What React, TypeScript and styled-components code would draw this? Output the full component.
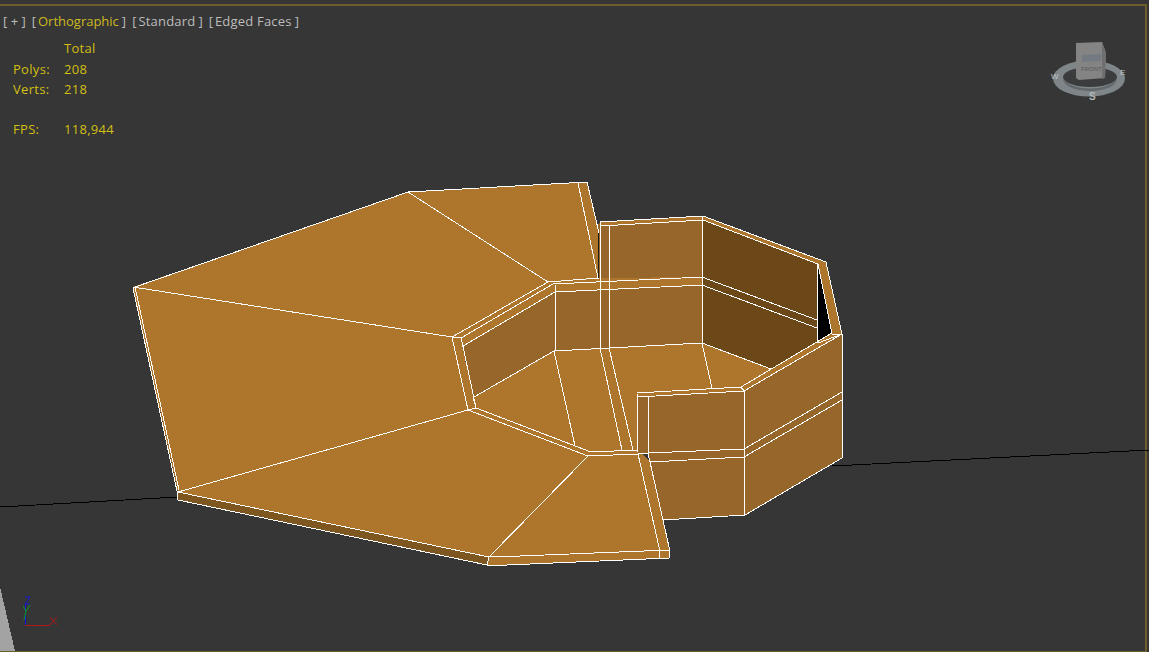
import React from 'react'
import styled, { createGlobalStyle } from 'styled-components';

const GlobalStyle = createGlobalStyle`
  html, body {
    margin: 0;
    padding: 0;
    background: #363636;
  }
`;

const Viewport = styled.div`
  position: relative;
  box-sizing: border-box;
  width: 1149px;
  height: 652px;
  padding-top: 4px;
  overflow: hidden;
  background: #363636;
  font-family: "Open Sans", "Noto Sans", sans-serif;
  font-size: 13px;
`;

const Frame = styled.div`
  box-sizing: border-box;
  width: 1147px;
  height: 648px;
  padding: 6px 0 0 3px;
  border-top: 2px solid #6e5e2c;
  border-right: 2px solid #6e5e2c;
  border-bottom: 1px solid #6e5e2c;
`;

const LabelBar = styled.div`
  display: flex;
  gap: 6px;
  height: 18px;
  line-height: 18px;
  color: #bdbdbd;
  white-space: nowrap;
`;

const Label = styled.span`
  display: flex;
  gap: 2px;
`;

const LabelName = styled.span<{ $active?: boolean }>`
  margin-right: 1px;
  letter-spacing: ${(props) => (props.$active ? '0' : '0.2px')};
  color: ${(props) => (props.$active ? '#cdb91e' : '#bdbdbd')};
`;

const Stats = styled.div`
  display: grid;
  grid-template-columns: 51px auto;
  grid-template-rows: 21px;
  grid-auto-rows: 20px;
  margin: 8px 0 0 10px;
  line-height: 20px;
  letter-spacing: 0.3px;
  color: #d2bf12;
`;

const Gap = styled.div`
  grid-column: 1 / 3;
`;

const Scene = styled.svg`
  position: absolute;
  left: 0;
  top: 0;
  width: 1149px;
  height: 652px;
  shape-rendering: crispEdges;
`;

const Gizmo = styled.svg`
  position: absolute;
  left: 1046px;
  top: 38px;
  width: 84px;
  height: 66px;
`;

const Tripod = styled.svg`
  position: absolute;
  left: 16px;
  top: 592px;
  width: 46px;
  height: 38px;
`;

const faces: [string, string][] = [
  // back walls
  ['#96662a', '555,285 600,222 703,218 703,345 555,352'],
  ['#96662a', '462,346 555,285 555,352 474,398'],
  ['#6c4819', '702,220 817,264 817,345 771,369 702,343'],
  ['#000000', '818,268 833,334 818,343'],
  // top rim of the room
  ['#ae752c', '600,222 703,216 826,262 842,334 832,334 818,264 703,220 601,226'],
  // room floor
  ['#ae752c', '474,397 554,351 702,343 771,369 742,390 637,393 638,452 591,452 476,408'],
  // big floor
  ['#ae752c', '133,287 408,192 587,182 599,233 599,279 548,282 553,284 555,292 462,346 476,408 591,452 638,450 650,462 663,520 669,547 669,558 507,565 487,565 489,557 178,492'],
  ['#7d5620', '178,492 489,557 487,565 178,500'],
  ['#ae752c', '548,282 599,278 703,277 703,285 555,292 462,346 452,337'],
  // front block
  ['#96662a', '638,397 744,391 745,515 663,520 648,453 638,454'],
  ['#96662a', '744,391 842,334 842,458 745,515'],
  ['#ae752c', '637,393 741,387 832,333 842,334 744,391 638,397'],
];

const wires: string[] = [
  // big floor outline
  '135,287 408,192 587,182 599,233',
  '133,288 177,491 178,500 487,565 507,565 669,558 669,547 663,520 745,515 842,458 842,334',
  '135,287 179,490',
  '178,492 489,557 520,556 669,550',
  '408,192 548,282',
  '578,183 598,278',
  '133,287 452,337',
  '178,492 468,410',
  '588,456 489,557',
  '489,557 487,565',
  '659,547 659,558',
  '588,456 638,454 659,547',
  '591,452 638,450',
  '648,453 650,462 663,520 669,547',
  // inner rim
  '452,337 548,282 599,278',
  '461,338 553,284 703,277',
  '463,346 555,292 703,285',
  '452,337 461,337',
  '452,337 468,410 588,456',
  '461,337 476,408 591,452',
  '468,410 476,408',
  // walls
  '600,222 703,216 826,262 842,334 832,334 818,264 703,220 601,226',
  '600,222 600,348',
  '609,225 609,348',
  '555,285 555,351',
  '702,216 702,343',
  '817,264 817,343',
  '702,277 817,320',
  '702,285 817,328',
  // room floor
  '474,397 554,351 702,343 771,369',
  '554,351 575,446',
  '600,348 622,450',
  '609,348 633,450',
  '702,343 712,388',
  '473,397 476,408',
  // front block
  '637,393 741,387 832,333',
  '638,397 744,391 842,334',
  '637,393 638,452',
  '648,396 648,453',
  '638,454 648,453 744,449 842,392',
  '650,462 744,457 842,400',
  '744,391 745,515',
  '741,387 744,391',
  '842,334 842,458',
  '818,343 842,334',
];

function Model() {
  return (
    <Scene viewBox='0 0 1149 652'>
      <polyline points='0,507 178,497' fill='none' stroke='#000' />
      <polyline points='832,466 1149,450' fill='none' stroke='#000' />
      <polygon points='0,587 15,651 0,651' fill='#a3a3a3' />
      {faces.map(([fill, points]) => (
        <polygon key={points} points={points} fill={fill} />
      ))}
      <polyline points='598,233 598,279' fill='none' stroke='#1d1d1d' />
      {wires.map((points) => (
        <polyline key={points} points={points} fill='none' stroke='#fff' />
      ))}
    </Scene>
  );
}

function ViewCube() {
  return (
    <Gizmo viewBox='0 0 84 66'>
      <ellipse cx='43' cy='40.5' rx='36' ry='18' fill='#7f8689' />
      <ellipse cx='44' cy='39' rx='27' ry='10' fill='#3a3c3d' />
      <path d='M17 41 A27 12 0 0 0 71 41 A29 15 0 0 1 17 41Z' fill='#62676a' />
      <polygon points='30,5 56,4 60,15 59,40 33,42 30,40' fill='#848484' />
      <polygon points='56,4 60,15 59,40 56,41' fill='#6f6f6f' />
      <polygon points='36,17 55,16 55,23 36,24' fill='#747a82' />
      <text x='35' y='33' fontSize='6' fill='#55585a' fontFamily='"Liberation Sans", sans-serif'>FRONT</text>
      <text x='5' y='41' fontSize='8' fill='#c0c4c6' fontFamily='"Liberation Sans", sans-serif'>W</text>
      <text x='74' y='37' fontSize='8' fill='#c0c4c6' fontFamily='"Liberation Sans", sans-serif'>E</text>
      <text x='43' y='62' fontSize='10' fontWeight='700' fill='#b4b8ba' fontFamily='"Liberation Sans", sans-serif'>S</text>
    </Gizmo>
  );
}

function AxisTripod() {
  return (
    <Tripod viewBox='0 0 46 38'>
      <line x1='9' y1='33.5' x2='34' y2='33.5' stroke='#b01818' />
      <line x1='9.5' y1='33' x2='9.5' y2='12' stroke='#1616d8' />
      <path d='M34 25l7 8M41 25l-7 8' fill='none' stroke='#b01818' />
      <path d='M9 5h5l-5 7h5' fill='none' stroke='#1616d8' />
      <path d='M7 14l3 5 4-6M10 19l-2 9' fill='none' stroke='#0e9a1e' />
    </Tripod>
  );
}

function App() {
  return (
    <Viewport>
      <GlobalStyle />
      <Frame>
        <LabelBar>
          <span>[ + ]</span>
          <Label><span>[</span><LabelName $active>Orthographic</LabelName><span>]</span></Label>
          <Label><span>[</span><LabelName>Standard</LabelName><span>]</span></Label>
          <Label><span>[</span><LabelName>Edged Faces</LabelName><span>]</span></Label>
        </LabelBar>
        <Stats>
          <span />
          <span>Total</span>
          <span>Polys:</span>
          <span>208</span>
          <span>Verts:</span>
          <span>218</span>
          <Gap />
          <span>FPS:</span>
          <span>118,944</span>
        </Stats>
      </Frame>
      <Model />
      <ViewCube />
      <AxisTripod />
    </Viewport>
  )
}

export default App
